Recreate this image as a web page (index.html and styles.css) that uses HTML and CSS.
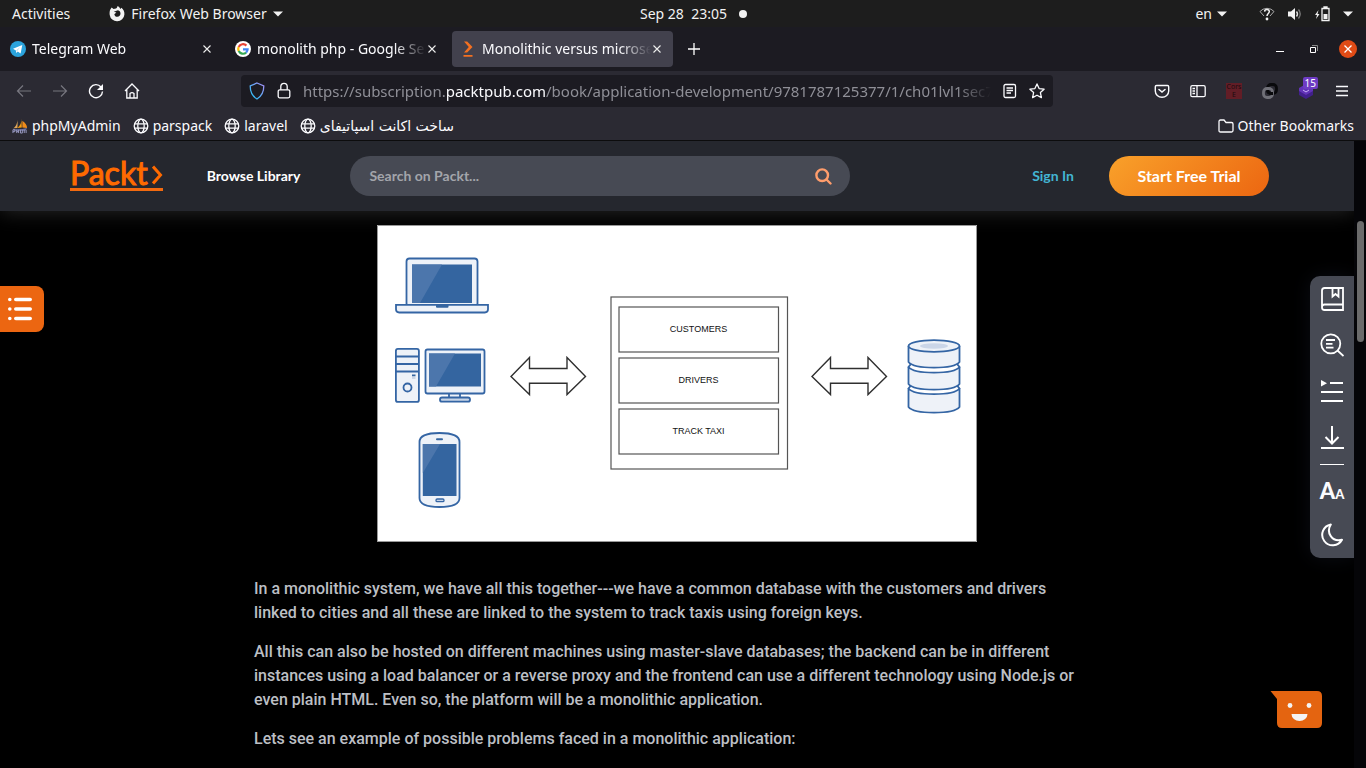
FILE: index.html
```html
<!DOCTYPE html>
<html lang="en">
<head>
<meta charset="utf-8">
<title>Monolithic versus microservices</title>
<link rel="stylesheet" href="styles.css">
</head>
<body>
<div class="screen">
  <header class="topbar">
    <div class="topbar-left">
      <button class="plain" type="button">Activities</button>
      <button class="plain app-menu" type="button">
        <svg width="16" height="16" viewBox="0 0 16 16"><path d="M1.200 3.800 2.600 1.600 4.600 3 7 2.400C8.200 2 8.200 1 8.600.1c1 .5 2.200 1.500 2.700 2.900l1.200-1.200C14.600 3.600 15.600 6 15.400 8.500A7.400 7.400 0 0 1 .7 9C.5 7 .6 5.200 1.200 3.800Z" fill="#f2f2f2"/><path d="M4.800 5.800 7.400 6.500 5.300 8.200c.3 1.600 1.400 2.600 3 2.600 1.900 0 3.200-1.500 3.200-3.300 0-1.800-1.200-3-2.500-3.300L7.500 4.700Z" fill="#1d1d1d"/></svg>
        <span>Firefox Web Browser</span>
        <svg width="10" height="6" viewBox="0 0 10 6"><path d="M0 .5h10L5 5.500Z" fill="#f2f2f2"/></svg>
      </button>
    </div>
    <div class="clock"><span>Sep 28&nbsp; 23:05</span><i class="dot"></i></div>
    <div class="topbar-right">
      <button class="plain lang" type="button"><span>en</span><svg width="10" height="6" viewBox="0 0 10 6"><path d="M0 .5h10L5 5.500Z" fill="#f2f2f2"/></svg></button>
      <button class="plain status" type="button" aria-label="System menu">
        <svg width="16" height="14" viewBox="0 0 16 14" fill="none" stroke="#aaa"><path d="M5 9 1 4.500Q3.500 1.500 8 1.300q4.500.2 7 3.200L11 9" stroke-width="1"/><path d="M5.600 4.600c.2-3 5-2.600 4.700.1C10.200 6.500 8 6.500 8 9" stroke="#f2f2f2" stroke-width="1.500"/><circle cx="8" cy="12" r="1.400" fill="#f2f2f2" stroke="none"/></svg>
        <svg width="16" height="14" viewBox="0 0 16 14" fill="none"><path d="M1 4.500h3L8 1v12L4 9.500H1Z" fill="#f2f2f2"/><path d="M9.500 4.500q2 2.500 0 5" stroke="#ddd" stroke-width="1.400"/><path d="M11.500 2.500q3.500 4.500 0 9" stroke="#777" stroke-width="1.300"/></svg>
        <svg width="16" height="16" viewBox="0 0 16 16"><path d="M3.500 4 0 9h2l-1 4L4.500 8h-2Z" fill="#f2f2f2"/><path d="M7 2.500h7v12H7ZM9 1h3v1.500H9Z" fill="none" stroke="#f2f2f2" stroke-width="1.300"/><path d="M8.500 8h4v5h-4Z" fill="#f2f2f2"/></svg>
        <svg width="10" height="6" viewBox="0 0 10 6"><path d="M0 .5h10L5 5.500Z" fill="#f2f2f2"/></svg>
      </button>
    </div>
  </header>

  <div class="tabs">
    <div class="tab">
      <svg width="16" height="16" viewBox="0 0 16 16"><circle cx="8" cy="8" r="8" fill="#2ba3dc"/><path d="m3 7.800 9.300-3.800-1.700 8.500-2.800-2-1.500 1.500-.4-2.600Z" fill="#fff"/><path d="m6 9.400 4.500-3.600-3.300 4.300" fill="#b9dcef"/></svg>
      <button class="tab-title" type="button">Telegram Web</button>
      <button class="close" type="button" aria-label="Close tab"><svg width="8" height="8" viewBox="0 0 8 8"><path d="m.5.5 7 7m0-7-7 7" stroke="#eee" stroke-width="1.100"/></svg></button>
    </div>
    <div class="tab">
      <svg width="16" height="16" viewBox="0 0 16 16" fill="none" stroke-width="2.200"><circle cx="8" cy="8" r="8" fill="#fff"/><path d="M11.400 4.600A4.800 4.800 0 0 0 3.700 5.900" stroke="#ea4335"/><path d="M3.700 5.900a4.800 4.800 0 0 0 0 4.200" stroke="#fbbc05"/><path d="M3.700 10.100a4.800 4.800 0 0 0 7.400 1.500" stroke="#34a853"/><path d="M11.100 11.600A4.600 4.600 0 0 0 12.600 8.300H8" stroke="#4285f4"/></svg>
      <button class="tab-title" type="button">monolith php - Google Search</button>
      <button class="close" type="button" aria-label="Close tab"><svg width="8" height="8" viewBox="0 0 8 8"><path d="m.5.5 7 7m0-7-7 7" stroke="#eee" stroke-width="1.100"/></svg></button>
    </div>
    <div class="tab active">
      <svg width="16" height="16" viewBox="0 0 16 16"><path d="M4 .5h3.200L12.500 6 7.200 11.500H4L8.800 6ZM3.500 14h9v1.800h-9Z" fill="#f37021"/></svg>
      <button class="tab-title" type="button">Monolithic versus microservices</button>
      <button class="close" type="button" aria-label="Close tab"><svg width="8" height="8" viewBox="0 0 8 8"><path d="m.5.5 7 7m0-7-7 7" stroke="#eee" stroke-width="1.100"/></svg></button>
    </div>
    <button class="plain new-tab" type="button" aria-label="New tab"><svg width="12" height="12" viewBox="0 0 12 12"><path d="M6 0v12M0 6h12" stroke="#fff" stroke-width="1.300"/></svg></button>
    <div class="window-buttons">
      <button class="plain" type="button" aria-label="Minimize"><svg width="8" height="8" viewBox="0 0 8 8"><path d="M0 6.500h8" stroke="#fff"/></svg></button>
      <button class="plain" type="button" aria-label="Restore"><svg width="8" height="8" viewBox="0 0 8 8" fill="none"><path d="M.5 2.500h5v5h-5Z" stroke="#fff"/><path d="M2 .5h5.500V6" stroke="#888"/></svg></button>
      <button class="plain quit" type="button" aria-label="Close window"><svg width="8" height="8" viewBox="0 0 8 8"><path d="m.5.5 7 7m0-7-7 7" stroke="#fff" stroke-width="1.300"/></svg></button>
    </div>
  </div>

  <nav class="toolbar">
    <div class="tools">
      <button class="plain" type="button" aria-label="Back"><svg width="16" height="16" viewBox="0 0 16 16" fill="none" stroke="#77767f" stroke-width="1.200"><path d="M15 8H1.500M7 2.500 1.500 8 7 13.500"/></svg></button>
      <button class="plain" type="button" aria-label="Forward"><svg width="16" height="16" viewBox="0 0 16 16" fill="none" stroke="#77767f" stroke-width="1.200"><path d="M1 8h13.500M9 2.500 14.500 8 9 13.500"/></svg></button>
      <button class="plain" type="button" aria-label="Reload"><svg width="16" height="16" viewBox="0 0 16 16" fill="none"><path d="M13 4A6.500 6.500 0 1 0 14.500 8.500" stroke="#fbfbfe" stroke-width="1.400"/><path d="M15 1v6H9Z" fill="#fbfbfe"/></svg></button>
      <button class="plain" type="button" aria-label="Home"><svg width="16" height="16" viewBox="0 0 16 16" fill="none" stroke="#fbfbfe" stroke-width="1.300"><path d="m1 8 7-7 7 7M2.800 6.500V15h10.400V6.500"/><path d="M6 15v-4.500q2-1.800 4 0V15"/></svg></button>
    </div>
    <div class="urlbar">
      <svg width="16" height="18" viewBox="0 0 16 18" fill="none"><defs><linearGradient id="shield" x1="0" y1="1" x2="1" y2="0"><stop offset="0" stop-color="#19c3f5"/><stop offset="1" stop-color="#a98df5"/></linearGradient></defs><path d="M8 1 14.800 4c0 6-1.800 10-6.800 13C3 14 1.200 10 1.200 4Z" stroke="url(#shield)" stroke-width="1.300"/></svg>
      <svg width="14" height="18" viewBox="0 0 14 18" fill="none" stroke="#fbfbfe" stroke-width="1.300"><rect x="1.200" y="7.800" width="11.600" height="8" rx="1.500"/><path d="M3.800 7.800V4.500a3.200 3.200 0 0 1 6.400 0v3.300"/></svg>
      <div class="url" role="textbox" aria-label="Address" contenteditable="true" spellcheck="false">https://subscription.<b>packtpub.com</b>/book/application-development/9781787125377/1/ch01lvl1sec7</div>
      <svg width="14" height="16" viewBox="0 0 14 16" fill="none" stroke="#fbfbfe" stroke-width="1.300"><rect x="1" y="1.500" width="11.500" height="13" rx="1.500"/><path d="M3.500 5H10M3.500 7.500H10M3.500 10H8"/></svg>
      <svg width="16" height="16" viewBox="0 0 16 16" fill="none" stroke="#fbfbfe" stroke-width="1.300" stroke-linejoin="round"><path d="m8 .9 2.100 4.700 5 .6-3.700 3.400 1 5L8 12.200l-4.400 2.400 1-5L.9 6.200l5-.6Z"/></svg>
    </div>
    <div class="tools">
      <button class="plain" type="button" aria-label="Pocket"><svg width="16" height="16" viewBox="0 0 16 16" fill="none" stroke="#fbfbfe" stroke-width="1.400" stroke-linecap="round"><path d="M2.500 2.500h11q1.200 0 1.200 1.200V8a6.700 6.300 0 0 1-13.400 0V3.700q0-1.200 1.200-1.200Z"/><path d="M5 6.500 8 9l3-2.500" stroke-width="1.600"/></svg></button>
      <button class="plain" type="button" aria-label="Sidebar"><svg width="16" height="16" viewBox="0 0 16 16" fill="none" stroke="#fbfbfe" stroke-width="1.300"><rect x=".8" y="2.700" width="14.400" height="11" rx="1.500"/><path d="M7 3v10.500M2.500 5.500H5M2.500 8H5M2.500 10.500H5"/></svg></button>
      <button class="plain cors" type="button">Cors E</button>
      <button class="plain" type="button" aria-label="Link extension"><svg width="18" height="18" viewBox="0 0 18 18" fill="none" stroke-width="2.800"><rect x="6.500" y="2.500" width="9" height="9" rx="3.500" stroke="#09090c"/><rect x="2.500" y="6.500" width="9" height="9" rx="3.500" stroke="#707078"/><path d="M6.500 8.500Q7 11.400 10 11.500h2" stroke="#09090c"/></svg></button>
      <button class="plain ext" type="button" aria-label="Extension"><svg width="16" height="16" viewBox="0 0 16 16"><path d="m1 5 7-4 7 4v6l-7 4-7-4Z" fill="#6233b8"/><path d="m1 8 7 4 7-4v4l-7 4-7-4Z" fill="#42208c"/><path d="m5 7 3 2 3-2" stroke="#c7b0f5" fill="none"/></svg><span class="badge">15</span></button>
      <button class="plain" type="button" aria-label="Menu"><svg width="12" height="12" viewBox="0 0 12 12"><path d="M0 1.500h12M0 6h12M0 10.500h12" stroke="#fbfbfe" stroke-width="1.300"/></svg></button>
    </div>
  </nav>

  <nav class="bookmarks">
    <a href="#"><svg width="16" height="16" viewBox="0 0 17 16"><path d="M6 1.500Q5.500 7 1.500 10.500L5.800 10Z" fill="#e3a85a"/><path d="M10 0Q10.500 6 5.800 10l4.600-.5Z" fill="#f89c0e"/><path d="M11 2.500Q16 6 16 10l-5-.3Z" fill="#f08c1a"/><path d="M1 11q7 1.500 15-1l-2 3H3Z" fill="#6f719c"/><path d="M1 15.500V12h2v2H1m4 1.500V12m0 2h2m0-2v3.500m2-3.500v3.500h2V12m2 3.500V12m2 0v3.500" stroke="#9b9cc5" fill="none"/></svg><span>phpMyAdmin</span></a>
    <a href="#"><svg class="globe" width="16" height="16" viewBox="0 0 16 16"><use href="#globe-shape"/></svg><span>parspack</span></a>
    <a href="#"><svg class="globe" width="16" height="16" viewBox="0 0 16 16"><use href="#globe-shape"/></svg><span>laravel</span></a>
    <a href="#"><svg class="globe" width="16" height="16" viewBox="0 0 16 16"><g id="globe-shape"><circle cx="8" cy="8" r="6.800"/><ellipse cx="8" cy="8" rx="3.200" ry="6.800"/><path d="M1.500 5.800h13M1.500 10.200h13"/></g></svg><span class="persian" lang="fa" dir="rtl">ساخت اکانت اسپاتیفای</span></a>
    <a class="other" href="#"><svg width="16" height="16" viewBox="0 0 16 16" fill="none" stroke="#fbfbfe" stroke-width="1.300"><path d="M1 3.500q0-1.500 1.500-1.500H6l2 2.500h5.500q1.500 0 1.500 1.500v6.500q0 1.500-1.500 1.500h-11Q1 14 1 12.500Z"/></svg><span>Other Bookmarks</span></a>
  </nav>

  <div class="viewport">
    <div class="page">
      <header class="site-header">
        <a class="logo" href="#" aria-label="Packt"><span>Packt</span><svg width="11" height="22" viewBox="0 0 11 22"><path d="M1 2.500 8.500 11 1 19.500" fill="none" stroke="#ff6a00" stroke-width="3"/></svg></a>
        <a class="browse" href="#">Browse Library</a>
        <form class="search">
          <input type="search" aria-label="Search on Packt" placeholder="Search on Packt...">
          <button class="plain" type="button" aria-label="Search"><svg width="17" height="17" viewBox="0 0 17 17" fill="none" stroke="#ff9d6c" stroke-width="2.400" stroke-linecap="round"><circle cx="7.200" cy="7.200" r="5.800"/><path d="m11.500 11.500 4 4"/></svg></button>
        </form>
        <a class="signin" href="#">Sign In</a>
        <button class="trial" type="button">Start Free Trial</button>
      </header>

      <main class="article">
        <figure class="diagram">
          <svg width="600" height="317" viewBox="0 0 600 317" fill="none" role="img" aria-label="Monolithic architecture">
            <rect width="600" height="317" fill="#fff"/>
            <path d="M.5 317V.5H599.500V316.500H0" stroke="#999"/>
            <g stroke="#3465a4" stroke-width="1.800" fill="#eef2f8">
              <rect x="29.500" y="33.500" width="71" height="48" rx="3"/>
              <path d="M19 79.800h92v4.500q0 3.200-3.200 3.200H22.200Q19 87.500 19 84.300Z"/>
              <rect x="18.900" y="123.900" width="23" height="53" rx="2"/>
              <path d="M19 131.500h23M19 139h23M19 146.500h23"/>
              <rect x="72" y="168" width="11" height="5"/>
              <rect x="48.500" y="124.500" width="59" height="44" rx="2"/>
              <rect x="63" y="172.500" width="30" height="4.200" rx="2" fill="#c7d4e6"/>
              <circle cx="30.500" cy="162.500" r="4"/>
              <path d="M42.500 217q0-9 20-9t20 9v56q0 9-20 9t-20-9Z"/>
              <rect x="59" y="274" width="8" height="2.600" rx="1.200" fill="#c7d4e6" stroke-width="1.300"/>
            </g>
            <g fill="#3465a0">
              <rect x="35" y="39.500" width="60" height="38.500"/>
              <rect x="59" y="79.500" width="12.500" height="3.200" rx="1"/>
              <rect x="52" y="128.500" width="52" height="33"/>
              <rect x="45.800" y="219" width="33.700" height="52"/>
              <rect x="59" y="213.200" width="7" height="2" rx="1"/>
              <rect x="35" y="149.500" width="3.500" height="1.800"/>
            </g>
            <path d="M35 39.500h30L43 78h-8ZM52 128.500h26L59 161.500h-7ZM45.800 219H63l-17.200 29Z" fill="#4c76ac"/>
            <path d="M35 153h3.500" stroke="#aabbd5"/>
            <path id="arrow" d="M134 151.500 152.500 132.500V143.500h37.500V132.500L208.500 151.500 190 169.500V158.200h-37.500V169.500Z" fill="#fff" stroke="#303030" stroke-width="1.400"/>
            <use href="#arrow" x="301"/>
            <g stroke="#555" stroke-width="1.200"><rect x="234" y="72" width="176.500" height="172"/><rect x="242" y="82" width="159.500" height="45"/><rect x="242" y="133" width="159.500" height="45"/><rect x="242" y="184" width="159.500" height="45"/></g>
            <g class="labels"><text x="321.500" y="107">CUSTOMERS</text><text x="321.500" y="158">DRIVERS</text><text x="321.500" y="209">TRACK TAXI</text></g>
            <g stroke="#3465a4" stroke-width="1.800" fill="#eef2f8">
              <path d="M531.500 163.500v18.500c6 7.500 45 7.500 51 0v-18.500"/>
              <path d="M531.500 163.500c6 7.500 45 7.500 51 0l-2.500-3h-46Z" fill="#fff"/>
              <path d="M531.500 142v17c6 7.500 45 7.500 51 0v-17"/>
              <path d="M531.500 142c6 7.500 45 7.500 51 0l-2.500-3h-46Z" fill="#fff"/>
              <path d="M531.500 121v16c6 7.500 45 7.500 51 0v-16"/>
              <ellipse cx="557" cy="121" rx="25.500" ry="5.800"/>
            </g>
            <ellipse cx="557" cy="121" rx="14" ry="2.800" fill="#cbd6e8"/>
          </svg>
        </figure>
        <p>In a monolithic system, we have all this together---we have a common database with the customers and drivers linked to cities and all these are linked to the system to track taxis using foreign keys.</p>
        <p>All this can also be hosted on different machines using master-slave databases; the backend can be in different instances using a load balancer or a reverse proxy and the frontend can use a different technology using Node.js or even plain HTML. Even so, the platform will be a monolithic application.</p>
        <p>Lets see an example of possible problems faced in a monolithic application:</p>
      </main>

      <button class="contents" type="button" aria-label="Contents"><svg width="24" height="24" viewBox="0 0 24 24" stroke="#fff" stroke-width="3.600" stroke-linecap="round"><path d="M7.800 2.500h14.400M7.800 12h14.400M7.800 21.500h14.400M1.800 2.500h.01M1.800 12h.01M1.800 21.500h.01"/></svg></button>

      <aside class="rail">
        <button class="plain" type="button" aria-label="Bookmark"><svg width="24" height="24" viewBox="0 0 24 24" fill="none" stroke="#fff" stroke-width="1.800"><path d="M23 17.500V1H4.500Q2 1 2 3.500v17Q2 23 4.500 23H23v-5.500H4.500Q2 17.500 2 20"/><path d="M12.500 1v8.500l3-2.500 3 2.500V1"/></svg></button>
        <button class="plain" type="button" aria-label="Search in book"><svg width="24" height="24" viewBox="0 0 24 24" fill="none" stroke="#fff" stroke-width="1.800"><circle cx="10.800" cy="10.800" r="9.500"/><path d="m17.500 17.500 6 5.500M6 7h9M6 10.800h6.500M6 14.600h7.500"/></svg></button>
        <button class="plain" type="button" aria-label="Playlist"><svg width="24" height="24" viewBox="0 0 24 24"><path d="M1 1 7 4.200 1 7.500Z" fill="#fff"/><path d="M10 4h13M1 13h22M1 22h22" stroke="#fff" stroke-width="2"/></svg></button>
        <button class="plain" type="button" aria-label="Download"><svg width="24" height="24" viewBox="0 0 24 24" fill="none" stroke="#fff" stroke-width="2"><path d="M12 1v17M5.500 12l6.500 6.500 6.500-6.500M1 23h23"/></svg></button>
        <hr>
        <button class="plain size" type="button" aria-label="Text size">A<small>A</small></button>
        <button class="plain" type="button" aria-label="Dark mode"><svg width="24" height="24" viewBox="0 0 24 24" fill="none" stroke="#fff" stroke-width="2" stroke-linejoin="round"><path d="M10.800 1.500A10.500 10.500 0 1 0 22 16.800C12 19.500 5.800 9.500 10.800 1.500Z"/></svg></button>
      </aside>

      <button class="chat" type="button" aria-label="Chat"><svg width="52" height="38" viewBox="0 0 52 38"><path d="M.5 1H47q5 0 5 5v27q0 5-5 5H12q-5 0-5-5V9Z" fill="#e46410"/><circle cx="20" cy="15.500" r="2.400" fill="#f4f4f4"/><circle cx="39" cy="15.500" r="2.400" fill="#f4f4f4"/><path d="M21.500 24h16a8 7 0 0 1-16 0Z" fill="#f4f4f4"/></svg></button>
    </div>
    <div class="scrollbar"><div class="thumb"></div></div>
  </div>
</div>
</body>
</html>
```
FILE: styles.css
```css
* { box-sizing: border-box; }
body {
  margin: 0;
  background: #000;
  color: #fbfbfe;
  font: 14px/20px "Noto Sans", "Open Sans", sans-serif;
}
svg { display: block; flex: none; }
a { color: inherit; text-decoration: none; }
button { font: inherit; color: inherit; cursor: pointer; }
.screen { display: flex; flex-direction: column; height: 100vh; overflow: hidden; }
.plain {
  display: flex; align-items: center; justify-content: center;
  padding: 0; border: 0; background: none; white-space: nowrap;
}

/* Desktop bar */
.topbar {
  display: grid; grid-template-columns: 1fr auto 1fr; align-items: center;
  height: 27px; flex: none; padding: 0 13px 0 12px;
  background: #1d1d1d; color: #f2f2f2;
}
.topbar-left, .topbar-right { display: flex; align-items: center; }
.topbar-left { gap: 39px; }
.app-menu { gap: 6px; }
.topbar-right { justify-content: flex-end; gap: 32px; }
.lang { gap: 5px; }
.status { gap: 12px; }
.clock { display: flex; align-items: center; gap: 12px; padding-left: 22px; }
.dot { width: 8px; height: 8px; border-radius: 50%; background: #f2f2f2; }

/* Tabs */
.tabs {
  display: flex; align-items: center; gap: 4px;
  height: 44px; flex: none; padding: 0 9px 0 2px; background: #1c1b22;
}
.tab {
  display: flex; align-items: center;
  width: 221px; height: 36px; padding: 0 12px 0 8px; border-radius: 4px;
}
.tab.active { background: #42414d; }
.tab-title {
  flex: 1; min-width: 0; padding: 0 0 0 6px; margin-right: 2px; border: 0; background: none;
  text-align: left; white-space: nowrap; overflow: hidden;
  -webkit-mask-image: linear-gradient(to right, #000 82%, transparent);
  mask-image: linear-gradient(to right, #000 82%, transparent);
}
.close { display: flex; padding: 0; border: 0; background: none; }
.new-tab { width: 34px; height: 36px; }
.window-buttons { display: flex; align-items: center; gap: 16px; margin-left: auto; }
.window-buttons .plain { width: 18px; height: 18px; }
.window-buttons .quit { background: #e04b16; border-radius: 50%; }

/* Navigation toolbar */
.toolbar {
  display: flex; align-items: center;
  height: 40px; flex: none; padding: 0 6px; background: #2b2a33;
}
.tools { display: flex; }
.tools .plain { width: 36px; height: 32px; }
.urlbar {
  display: flex; align-items: center; flex: 1; min-width: 0; gap: 12px;
  height: 32px; margin: 0 91px; padding: 0 8px; border-radius: 4px; background: #1c1b22;
}
.url {
  flex: 1; min-width: 0; overflow: hidden; white-space: nowrap; color: #8f8f97; font-size: 15px;
  -webkit-mask-image: linear-gradient(to right, #000 95%, transparent);
  mask-image: linear-gradient(to right, #000 95%, transparent);
}
.url b { font-weight: 400; color: #fbfbfe; }
.tools .cors {
  width: 16px; height: 16px; margin: 8px 10px;
  background: #621d26; color: #1a0c10; white-space: normal; font-size: 7px; line-height: 8px;
}
.ext { position: relative; }
.badge {
  position: absolute; top: 2px; right: 6px; padding: 0 2px; border-radius: 2px;
  background: #6e3cc4; color: #fff; font-size: 10px; line-height: 12px;
}

/* Bookmarks */
.bookmarks {
  display: flex; align-items: center; gap: 12px;
  height: 30px; flex: none; padding: 0 12px; background: #2b2a33; border-bottom: 1px solid #0c0c0d;
}
.bookmarks a { display: flex; align-items: center; gap: 4px; }
.globe { fill: none; stroke: #fbfbfe; stroke-width: 1.3px; }
.persian { font-family: "DejaVu Sans", sans-serif; }
.bookmarks .other { margin-left: auto; }

/* Page */
.viewport { display: flex; flex: 1; min-height: 0; }
.page {
  position: relative; flex: 1; min-width: 0; overflow: hidden;
  font-family: Lato, sans-serif;
}
.site-header {
  display: flex; align-items: center; height: 70px; padding: 0 85px 0 70px;
  background: #25272e; box-shadow: 0 0 20px #2b2b2b;
}
.logo {
  display: flex; align-items: flex-start; gap: 4px; height: 30px; margin-right: 44px;
  border-bottom: 3px solid #f26a10; color: #ff6a00; font-size: 32px; line-height: 24px;
  -webkit-text-stroke: 1px #ff6a00;
}
.logo svg { margin-top: 3px; }
.browse { margin-right: 50px; color: #fff; font-weight: 700; font-size: 14px; }
.search {
  display: flex; align-items: center; width: 500px; height: 40px;
  padding: 0 18px 0 19px; border-radius: 20px; background: #474a54;
}
.search input {
  flex: 1; min-width: 0; padding: 0; border: 0; outline: 0; background: none; color: #fff;
  font: 700 14px/20px Lato, sans-serif;
}
.search input::placeholder { color: #a3a5ab; opacity: 1; }
.signin { margin-left: auto; margin-right: 35px; color: #43b5d3; font-weight: 700; font-size: 14px; }
.trial {
  width: 160px; height: 40px; padding: 0; border: 0; border-radius: 20px;
  background: linear-gradient(135deg, #f9a12a, #ec6611); color: #fff; font-weight: 700; font-size: 16px;
}
.article { max-width: 846px; margin: 0 auto; padding-top: 14px; color: #bcbfc4; }
.diagram { display: flex; justify-content: center; margin: 0 0 35px; }
.article p { max-width: 834px; margin: 0 0 15px; font: 500 16px/24px Roboto, sans-serif; }
.labels { fill: #111; font: 9px "Liberation Sans", sans-serif; text-anchor: middle; }

/* Floating controls */
.contents {
  position: absolute; left: 0; top: 145px; display: flex; align-items: center;
  width: 44px; height: 46px; padding: 0 0 0 8px; border: 0;
  border-radius: 0 8px 8px 0; background: #ec6611;
}
.rail {
  position: absolute; right: 0; top: 135px; display: flex; flex-direction: column; align-items: center;
  gap: 22px; width: 44px; padding: 11px 0; border-radius: 10px 0 0 10px;
  background: #474a54; box-shadow: 0 0 20px #0b0d14;
}
.rail .plain { height: 24px; }
.rail hr { width: 24px; height: 1px; margin: -7px 0 -10px; border: 0; background: #fff; }
.rail .size { align-items: baseline; font: 900 22px/28px Lato, sans-serif; }
.size small { font-size: 13px; }
.chat { position: absolute; right: 32px; bottom: 40px; padding: 0; border: 0; background: none; }
.scrollbar { width: 12px; flex: none; padding: 80px 2px 0 3px; background: #050508; }
.thumb { height: 121px; border-radius: 4px; background: #6b6b6b; }
```
